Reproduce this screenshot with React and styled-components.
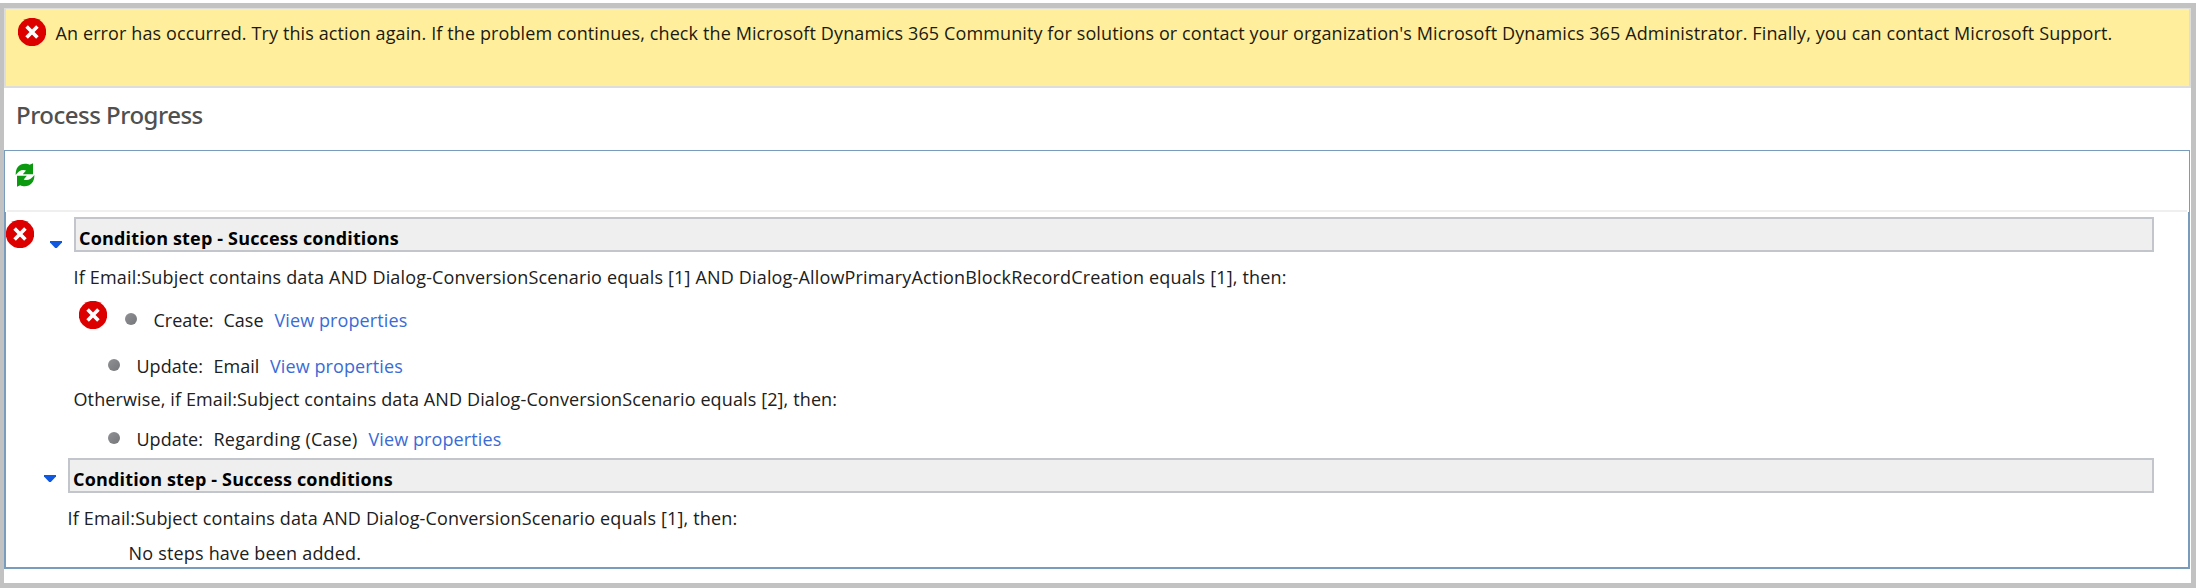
import React from "react";
import styled, { createGlobalStyle } from "styled-components";

const GlobalStyle = createGlobalStyle`
  * { box-sizing: border-box; }
  body {
    margin: 0;
    background: #fff;
    color: #202020;
    font: 400 18px/26px "Open Sans", "Noto Sans", sans-serif;
  }
`;

const Page = styled.div`
  height: 588px;
  padding-top: 3px;
`;

const Frame = styled.div`
  height: 585px;
  border: 5px solid #c2c2c2;
  border-left-width: 4px;
  background: #fff;
`;

const Banner = styled.div`
  display: flex;
  align-items: flex-start;
  gap: 9.5px;
  height: 80px;
  padding: 9px 0 0 12px;
  border: 2px solid #dddddd;
  border-top-width: 1px;
  background: #ffef9d;
`;

const BannerText = styled.span`
  margin-top: 2px;
  letter-spacing: 0.111px;
  white-space: nowrap;
  color: #1c1a10;
`;

const Title = styled.h1`
  height: 62px;
  margin: 0;
  padding: 10px 0 0 12px;
  font: 500 24px/34px "Noto Sans", sans-serif;
  letter-spacing: -0.5px;
  color: #505050;
`;

const Panel = styled.div`
  display: flex;
  flex-direction: column;
  width: 2186px;
  height: 419px;
`;

const Toolbar = styled.div`
  flex: none;
  height: 62px;
  padding: 0 2px;
  border: 1px solid #7a9cbc;
  border-bottom: 0;
`;

const ToolbarInner = styled.div`
  height: 61px;
  padding: 12px 0 0 8px;
  border-bottom: 2px solid #efefef;
`;

const Steps = styled.div`
  flex: 1;
  border: 2px solid #7a9cbc;
  border-top: 0;
`;

const StepHeader = styled.div`
  display: flex;
  align-items: flex-start;
  height: 35px;
  margin-top: ${(p) => p.$gap}px;
  padding: 0 34px 0 ${(p) => p.$indent}px;
`;

const FirstRow = styled.div`
  padding-top: 5px;
`;

const HeaderMark = styled.span`
  flex: none;
  display: flex;
  width: ${(p) => p.$width}px;
  padding-top: ${(p) => p.$top}px;
`;

const StepName = styled.div`
  flex: 1;
  height: 35px;
  padding: 6px 0 0 3px;
  border: 2px solid #c2c6cc;
  background: #efefef;
  color: #000;
  font-weight: 700;
  line-height: 26px;
  letter-spacing: 0.17px;
  white-space: nowrap;
`;

const Condition = styled.div`
  height: 26px;
  margin-top: ${(p) => p.$gap}px;
  padding-left: ${(p) => p.$indent}px;
  letter-spacing: ${(p) => p.$spacing}px;
  white-space: nowrap;
`;

const Action = styled.div`
  display: flex;
  align-items: center;
  height: 26px;
  margin-top: ${(p) => p.$gap}px;
  padding-left: ${(p) => p.$indent}px;
  white-space: nowrap;
`;

const FailedMark = styled.span`
  display: flex;
  width: 46px;
  margin-top: -10px;
`;

const Bullet = styled.span`
  width: 12px;
  height: 12px;
  margin: 0 16.5px 2px 0;
  border-radius: 50%;
  background: linear-gradient(135deg, #8f9194, #74767a);
`;

const Verb = styled.span`
  width: ${(p) => p.$width}px;
`;

const Target = styled.span`
  width: ${(p) => p.$width}px;
  letter-spacing: ${(p) => p.$spacing || 0}px;
`;

const Link = styled.a`
  color: #3a6bd6;
  letter-spacing: 0.1px;
`;

const Svg = styled.svg`
  display: block;
  flex: none;
`;

const ErrorIcon = () => (
  <Svg width="28" height="28" viewBox="0 0 28 28">
    <circle cx="14" cy="14" r="14.2" fill="#dc0000" />
    <path d="M8.6 8.6 19.4 19.4M19.4 8.6 8.6 19.400" stroke="#fff" strokeWidth="3.6" />
  </Svg>
);

const ArrowIcon = () => (
  <Svg width="12" height="7" viewBox="0 0 12 7">
    <path d="M0 0H12V1.4L6.8 7H5.2L0 1.4Z" fill="#1058e0" />
  </Svg>
);

const RefreshIcon = () => (
  <Svg width="20" height="24" viewBox="0 0 20 24">
    <g fill="#0b9a0f">
      <path d="M.7 12C.5 5 4 .8 10 .8c2 0 3.300.3 4.600 1L18 .3V11.300H7.800l3.200-3.700C7.400 6 3.500 8 .7 12Z" />
      <path d="M19.400 12c.1 7-4 11.300-9.600 11.300-2 0-3.300-.3-4.600-1L2 23.700V12.800h9.900l-3.200 3.600c3.600 1.700 7.800-.4 10.700-4.400Z" />
    </g>
  </Svg>
);

export default function App() {
  return (
    <Page>
      <GlobalStyle />
      <Frame>
        <Banner>
          <ErrorIcon />
          <BannerText>
            An error has occurred. Try this action again. If the problem continues, check the Microsoft Dynamics 365
            Community for solutions or contact your organization's Microsoft Dynamics 365 Administrator. Finally, you
            can contact Microsoft Support.
          </BannerText>
        </Banner>
        <Title>Process Progress</Title>
        <Panel>
          <Toolbar>
            <ToolbarInner>
              <RefreshIcon />
            </ToolbarInner>
          </Toolbar>
          <Steps>
            <FirstRow>
              <StepHeader $gap={0} $indent={0}>
                <HeaderMark $width={44} $top={3}>
                  <ErrorIcon />
                </HeaderMark>
                <HeaderMark $width={24} $top={24}>
                  <ArrowIcon />
                </HeaderMark>
                <StepName>Condition step - Success conditions</StepName>
              </StepHeader>
            </FirstRow>
            <Condition $gap={12} $indent={67.6} $spacing={0.165}>
              If Email:Subject contains data AND Dialog-ConversionScenario equals [1] AND
              Dialog-AllowPrimaryActionBlockRecordCreation equals [1], then:
            </Condition>
            <Action $gap={17} $indent={73}>
              <FailedMark>
                <ErrorIcon />
              </FailedMark>
              <Bullet />
              <Verb $width={70}>Create:</Verb>
              <Target $width={51}>Case</Target>
              <Link>View properties</Link>
            </Action>
            <Action $gap={20} $indent={102}>
              <Bullet />
              <Verb $width={77}>Update:</Verb>
              <Target $width={56.5}>Email</Target>
              <Link>View properties</Link>
            </Action>
            <Condition $gap={7} $indent={67.5} $spacing={0.12}>
              Otherwise, if Email:Subject contains data AND Dialog-ConversionScenario equals [2], then:
            </Condition>
            <Action $gap={14} $indent={102}>
              <Bullet />
              <Verb $width={77}>Update:</Verb>
              <Target $width={155} $spacing={0.25}>
                Regarding (Case)
              </Target>
              <Link>View properties</Link>
            </Action>
            <StepHeader $gap={6} $indent={38}>
              <HeaderMark $width={24} $top={17}>
                <ArrowIcon />
              </HeaderMark>
              <StepName>Condition step - Success conditions</StepName>
            </StepHeader>
            <Condition $gap={12} $indent={61.6} $spacing={0.15}>
              If Email:Subject contains data AND Dialog-ConversionScenario equals [1], then:
            </Condition>
            <Condition $gap={9} $indent={122.6} $spacing={0.18}>
              No steps have been added.
            </Condition>
          </Steps>
        </Panel>
      </Frame>
    </Page>
  );
}
